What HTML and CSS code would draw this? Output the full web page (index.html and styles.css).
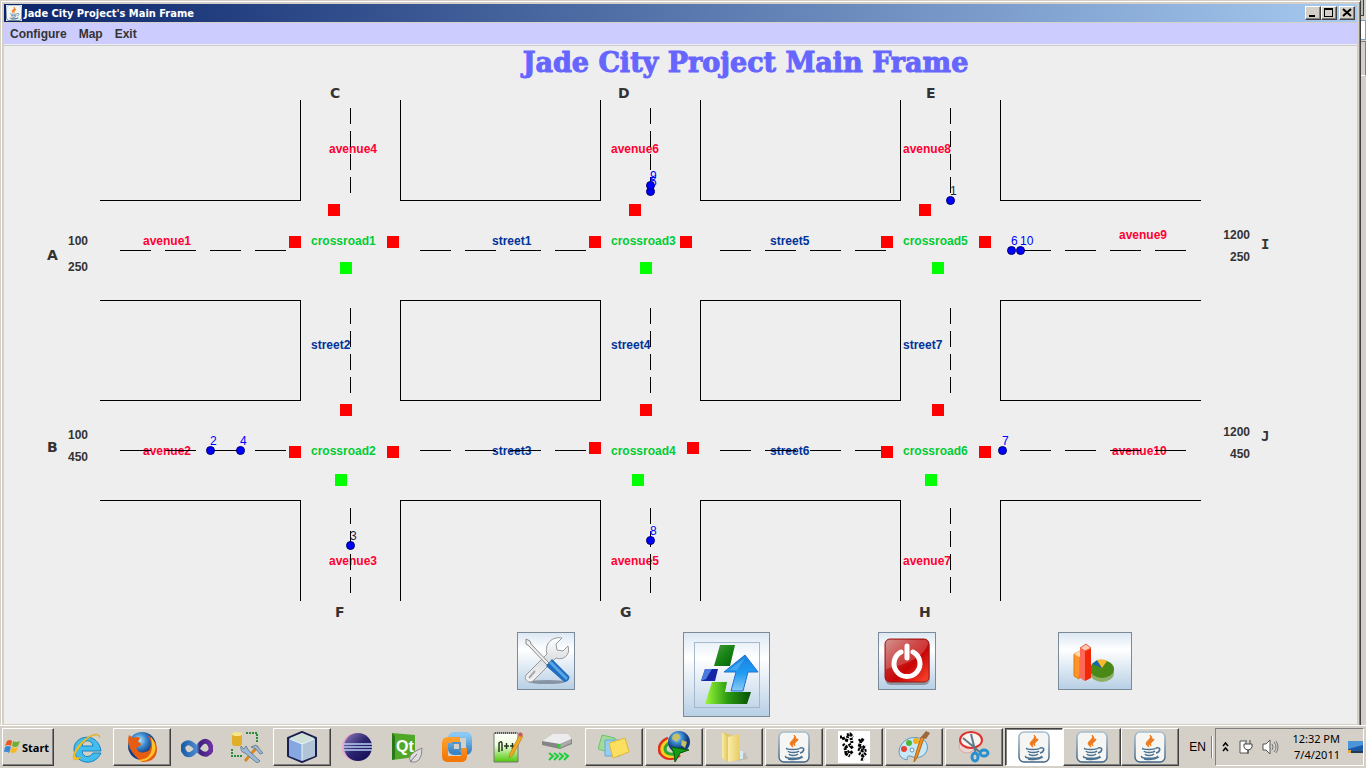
FILE: index.html
```html
<!DOCTYPE html>
<html lang="en">
<head>
<meta charset="utf-8">
<title>Jade City Project's Main Frame</title>
<link rel="stylesheet" href="styles.css">
</head>
<body>
<svg class="defs" aria-hidden="true">
  <defs>
    <linearGradient id="steel" x2="0" y2="1"><stop stop-color="#fff"/><stop offset=".5" stop-color="#dcdfe2"/><stop offset="1" stop-color="#f4f4f4"/></linearGradient>
    <linearGradient id="green" x2="1" y2="1"><stop stop-color="#4a9a42"/><stop offset=".5" stop-color="#168414"/><stop offset="1" stop-color="#076007"/></linearGradient>
    <linearGradient id="lime" x2="1" y2="0"><stop stop-color="#9cf83a"/><stop offset=".5" stop-color="#2a9a10"/><stop offset="1" stop-color="#065006"/></linearGradient>
    <linearGradient id="sky" x2="0" y2="1"><stop stop-color="#1b7fe0"/><stop offset=".5" stop-color="#1d9cf2"/><stop offset="1" stop-color="#8cc8f4"/></linearGradient>
    <linearGradient id="red" x2="1" y2="1"><stop stop-color="#c88078"/><stop offset=".4" stop-color="#c42020"/><stop offset=".6" stop-color="#c80505"/><stop offset="1" stop-color="#ff4a30"/></linearGradient>
    <linearGradient id="orange" x2="0" y2="1"><stop stop-color="#ff9d2a"/><stop offset="1" stop-color="#f47808"/></linearGradient>
    <linearGradient id="blue" x2="0" y2="1"><stop stop-color="#8cc8f4"/><stop offset="1" stop-color="#3a84c4"/></linearGradient>
    <linearGradient id="folder" x2="1" y2="0"><stop stop-color="#f9eda8"/><stop offset="1" stop-color="#e4c558"/></linearGradient>
    <linearGradient id="frame" x2="0" y2="1"><stop stop-color="#a8bfd0"/><stop offset="1" stop-color="#3f6383"/></linearGradient>
    <linearGradient id="violet" x2="1" y2="0"><stop stop-color="#1b5fa8"/><stop offset=".5" stop-color="#4d8ad0"/><stop offset=".6" stop-color="#40207c"/><stop offset="1" stop-color="#6a30a0"/></linearGradient>
    <linearGradient id="npp" x2="0" y2="1"><stop stop-color="#fff"/><stop offset=".4" stop-color="#f0ffe0"/><stop offset="1" stop-color="#50c808"/></linearGradient>
    <radialGradient id="globe" cx=".4" cy=".3"><stop stop-color="#b8ecff"/><stop offset=".5" stop-color="#3c8ad0"/><stop offset="1" stop-color="#123c80"/></radialGradient>
    <linearGradient id="dusk" x2="1" y2="1"><stop stop-color="#9080b8"/><stop offset=".5" stop-color="#2c2470"/><stop offset="1" stop-color="#100850"/></linearGradient>
    <symbol id="java" viewBox="0 0 32 32">
      <rect x="1" y="1" width="30" height="30" rx="5" fill="#f5f5f3" stroke="url(#frame)" stroke-width="1.5"/>
      <path d="M15 16c-8-5 4-7 1-12 6 5-4 7-1 12M17 15c-2-4 3-4 3-7-6 2-6 4-3 7" fill="#f07818" stroke="#f07818"/>
      <path d="M9 17c-3 2 14 2 12 0M10 20c1 2 9 2 11 0M11 23c1 2 7 2 9 0M22 17c6-1 4 4 0 5M8 25c-4 3 18 3 15 0M10 28c6 1 12 0 15-2" fill="none" stroke="#4a7190" stroke-width="1.5"/>
    </symbol>
    <rect id="light" width="12" height="12"/>
    <path id="dashes-h" d="M0 0h166" stroke-dasharray="31 14"/>
    <path id="dashes-v" d="M0 0v86" stroke-dasharray="16 7"/>
    <circle id="car" r="4"/>
  </defs>
</svg>

<div class="desktop">
  <main class="window">
    <header class="titlebar">
      <svg class="titlebar-icon"><use href="#java"/></svg>
      <span class="titlebar-text">Jade City Project's Main Frame</span>
      <button class="caption-button" aria-label="Minimize"><svg viewBox="0 0 14 12"><path d="M3 8h6v2H3z"/></svg></button>
      <button class="caption-button" aria-label="Maximize"><svg viewBox="0 0 14 12"><path d="M2 1h9v9H2zM3 3v6h7V3z" fill-rule="evenodd"/></svg></button>
      <button class="caption-button close" aria-label="Close"><svg viewBox="0 0 14 12"><path d="M3 2l8 7M11 2L3 9" stroke="#000" stroke-width="2"/></svg></button>
    </header>
    <nav class="menubar">
      <button class="menu">Configure</button><button class="menu">Map</button><button class="menu">Exit</button>
    </nav>
    <section class="content">
      <h1 class="heading">Jade City Project Main Frame</h1>
      <svg class="map" viewBox="4 80 1353 546" role="img" aria-label="City map">
        <g class="end-label">
          <text x="330" y="98">C</text><text x="618" y="98">D</text><text x="926" y="98">E</text>
          <text x="47" y="260">A</text><text x="47" y="452">B</text>
          <text x="335" y="617">F</text><text x="620" y="617">G</text><text x="919" y="617">H</text>
          <text class="mono" x="1261" y="249">I</text><text class="mono" x="1261" y="441">J</text>
        </g>
        <g class="coord">
          <text x="88" y="245">100</text><text x="88" y="271">250</text>
          <text x="88" y="439">100</text><text x="88" y="461">450</text>
          <text x="1250" y="239">1200</text><text x="1250" y="261">250</text>
          <text x="1250" y="436">1200</text><text x="1250" y="458">450</text>
        </g>
        <g class="road-label avenue">
          <text x="143" y="245">avenue1</text><text x="143" y="455">avenue2</text><text x="329" y="565">avenue3</text>
          <text x="329" y="153">avenue4</text><text x="611" y="565">avenue5</text><text x="611" y="153">avenue6</text>
          <text x="903" y="565">avenue7</text><text x="903" y="153">avenue8</text><text x="1119" y="239">avenue9</text>
          <text x="1112" y="455">avenue10</text>
        </g>
        <g class="road-label street">
          <text x="492" y="245">street1</text><text x="311" y="349">street2</text><text x="492" y="455">street3</text>
          <text x="611" y="349">street4</text><text x="770" y="245">street5</text><text x="770" y="455">street6</text>
          <text x="903" y="349">street7</text>
        </g>
        <g class="road-label crossroad">
          <text x="311" y="245">crossroad1</text><text x="311" y="455">crossroad2</text><text x="611" y="245">crossroad3</text>
          <text x="611" y="455">crossroad4</text><text x="903" y="245">crossroad5</text><text x="903" y="455">crossroad6</text>
        </g>
        <g class="lines" transform="translate(.4 .4)">
          <path d="M100 200H300V100M400 100V200H600V100M700 100V200H900V100M1000 100V200H1201"/>
          <path d="M100 300H300V400H100M400 300H600V400H400zM700 300H900V400H700zM1201 300H1000V400H1201"/>
          <path d="M100 500H300V601M400 601V500H600V601M700 601V500H900V601M1000 601V500H1201"/>
          <use href="#dashes-h" x="120" y="250"/><use href="#dashes-h" x="420" y="250"/><use href="#dashes-h" x="720" y="250"/><use href="#dashes-h" x="1020" y="250"/>
          <use href="#dashes-h" x="120" y="450"/><use href="#dashes-h" x="420" y="450"/><use href="#dashes-h" x="720" y="450"/><use href="#dashes-h" x="1020" y="450"/>
          <use href="#dashes-v" x="350" y="108"/><use href="#dashes-v" x="650" y="108"/><use href="#dashes-v" x="950" y="108"/>
          <use href="#dashes-v" x="350" y="308"/><use href="#dashes-v" x="650" y="308"/><use href="#dashes-v" x="950" y="308"/>
          <use href="#dashes-v" x="350" y="508"/><use href="#dashes-v" x="650" y="508"/><use href="#dashes-v" x="950" y="508"/>
        </g>
        <g class="stop">
          <use href="#light" x="328" y="204"/><use href="#light" x="289" y="236"/><use href="#light" x="387" y="236"/>
          <use href="#light" x="629" y="204"/><use href="#light" x="589" y="236"/><use href="#light" x="680" y="236"/>
          <use href="#light" x="919" y="204"/><use href="#light" x="881" y="236"/><use href="#light" x="979" y="236"/>
          <use href="#light" x="340" y="404"/><use href="#light" x="289" y="446"/><use href="#light" x="387" y="446"/>
          <use href="#light" x="640" y="404"/><use href="#light" x="589" y="442"/><use href="#light" x="687" y="442"/>
          <use href="#light" x="932" y="404"/><use href="#light" x="881" y="446"/><use href="#light" x="979" y="446"/>
        </g>
        <g class="go">
          <use href="#light" x="340" y="262"/><use href="#light" x="640" y="262"/><use href="#light" x="932" y="262"/>
          <use href="#light" x="335" y="474"/><use href="#light" x="632" y="474"/><use href="#light" x="925" y="474"/>
        </g>
        <g class="cars" transform="translate(.5 .5)">
          <use href="#car" x="210" y="450"/><use href="#car" x="240" y="450"/><use href="#car" x="350" y="545"/>
          <use href="#car" x="650" y="540"/><use href="#car" x="650" y="191"/><use href="#car" x="650" y="185"/>
          <use href="#car" x="950" y="200"/><use href="#car" x="1011" y="250"/><use href="#car" x="1020" y="250"/><use href="#car" x="1002" y="450"/>
        </g>
        <g class="car-label">
          <text x="210" y="445">2</text><text x="240" y="445">4</text><text class="dark" x="350" y="540">3</text>
          <text x="650" y="535">8</text><text x="650" y="186">5</text><text x="650" y="180">9</text>
          <text class="dark" x="950" y="195">1</text><text x="1011" y="245">6</text><text x="1020" y="245">10</text><text x="1002" y="445">7</text>
        </g>
      </svg>
      <div class="actions">
        <button class="action" aria-label="Settings">
          <svg width="48" height="48" viewBox="0 0 48 48">
            <ellipse cx="25" cy="45" rx="18" ry="2" fill="#6d7887" opacity=".7"/>
            <path d="M40 1l-6 6 1 6 6 1 5-5c3 9-5 15-12 12L12 43c-4 5-11 0-8-5l21-21C22 7 30-1 40 1z" fill="url(#steel)" stroke="#96999c"/>
            <path d="M7 41l6-7" stroke="#aaa" stroke-width="2"/>
            <path d="M4 2l4 2 1 3 18 19-2 2L7 9 4 7z" fill="#eee" stroke="#888"/>
            <path d="M30 22l17 17c2 3-3 8-6 5L24 29z" fill="#1f6fc0"/>
            <path d="M28 25l17 17" stroke="#5aa4e8" stroke-width="3"/>
          </svg>
        </button>
        <button class="action large" aria-label="Load">
          <span class="action-frame"><svg width="64" height="64" viewBox="0 0 64 64">
            <path d="M25 2h15l-5 21H19z" fill="url(#green)"/><path d="M10 26h13l-3 12H6z" fill="#1426a4"/><path d="M10 26h7l-6 10-5 2z" fill="#487ae0"/>
            <path d="M17 39h15l-2 10h26l-4 12H10z" fill="url(#lime)"/><path d="M50 12l13 17H53l-5 19H36l5-19H29z" fill="url(#sky)" stroke="#2470d0"/><path d="M50 15l-16 12h8z" fill="#55b0f0" opacity=".7"/>
          </svg></span>
        </button>
        <button class="action" aria-label="Power off">
          <svg width="48" height="48" viewBox="0 0 48 48">
            <rect x="2" y="3" width="45" height="45" rx="6" fill="#555" opacity=".5"/><rect x="2" y="2" width="44" height="43" rx="5" fill="url(#red)" stroke="#a01818"/>
            <path d="M6 3h36q3 0 3 4Q40 24 3 32V7q0-4 3-4" fill="#fff" opacity=".18"/>
            <path d="M18 15a13 13 0 1 0 12 0M24 9v12" fill="none" stroke="#fff" stroke-width="5" stroke-linecap="round"/>
          </svg>
        </button>
        <button class="action wide" aria-label="Statistics">
          <svg width="48" height="48" viewBox="0 0 48 48">
            <path d="M3 17l6-3v23l-1 5-5-3z" fill="#ff9428" stroke="#e47810"/><path d="M3 17l5 3 5-2-5-4z" fill="#ffd8a8"/>
            <ellipse cx="31" cy="36" rx="12" ry="9" fill="#8cb068"/><ellipse cx="31" cy="32" rx="12" ry="9" fill="#4a8818"/><path d="M31 31l-10-4 5-4z" fill="#1668a8"/><path d="M31 31l-5-8q6-2 10 1z" fill="#f8b830"/>
            <path d="M9 11l5 3v30l-5-3z" fill="#ff6858"/><path d="M14 14l6-3v30l-6 3z" fill="#f02808"/><path d="M9 11l6-4 5 4-6 3z" fill="#ffc8b0" stroke="#e85838"/>
          </svg>
        </button>
      </div>
    </section>
  </main>
  <aside class="behind"><span class="behind-button"></span><span class="behind-field"></span><span class="behind-thumb"></span></aside>
</div>

<footer class="taskbar">
  <button class="start raised">
    <svg width="17" height="16" viewBox="0 0 17 16"><path d="M3 2q3-2 5 0L7 7Q4 5 1 7z" fill="#e85820"/><path d="M9 2q3 2 7 0l-2 5q-3 2-6 0z" fill="#70b030"/><path d="M1 8q3-2 6 0l-2 6q-2-2-5-1z" fill="#3888d8"/><path d="M8 8q3 2 6 0l-2 5q-3 2-6 0z" fill="#f8b820"/></svg>Start
  </button>
  <button class="launcher first" aria-label="Internet Explorer"><svg viewBox="0 0 32 32"><path d="M30 20H11c1 8 9 6 11 2h8C23 37 3 32 3 18S27 0 30 20zM11 15h11c-1-7-10-7-11 0z" fill="#42bdf0" stroke="#1682c0"/><path d="M29 7C29-3 8 8 3 22c-3 9 2 8 8 4-8 2-9-1-3-9C16 6 27 0 29 7z" fill="#fbc520" stroke="#d89c10" stroke-width=".5"/></svg></button>
  <button class="task raised" aria-label="Firefox"><svg viewBox="0 0 32 32"><circle cx="16" cy="15" r="14" fill="url(#globe)"/><path d="M3 4l4 3q4-2 7 0l-2 4q3 0 3 3l-5 3q3 6 9 4 6-1 6-8 0-5-4-9 10 5 10 14 0 13-15 13S-2 19 3 4z" fill="#e85c10"/><path d="M25 6q9 12 0 20-6 6-14 3 16 0 15-16z" fill="#ffc62c"/></svg></button>
  <button class="launcher" aria-label="Visual Studio"><svg viewBox="0 0 32 32"><path d="M16 18Q9 9 4 13t1 10q6 3 12-7 6-9 11-4 5 8-2 11-5 1-10-5z" fill="none" stroke="url(#violet)" stroke-width="5"/></svg></button>
  <button class="launcher" aria-label="Database Tools"><svg viewBox="0 0 32 32"><rect x="1" y="2" width="10" height="13" rx="3" fill="#e0ae28"/><ellipse cx="6" cy="3" rx="5" ry="2" fill="#f8e48c"/><path d="M15 2h11v10M1 18v7h11" fill="none" stroke="#2c8c3c" stroke-width="2" stroke-dasharray="2 1"/><path d="M14 30l13-15" stroke="#d88820" stroke-width="3"/><path d="M10 15l3 3 2-3 3 5 11 10-3 2-12-10q-5-1-4-7M20 16l5-2 7 8-3 1-4-5z" fill="#9cb8d4" stroke="#6c8498"/></svg></button>
  <button class="task raised" aria-label="Cube"><svg viewBox="0 0 32 32"><path d="M16 1l14 6v18l-14 6-14-6V7z" fill="#b8d0e8" stroke="#1c2050" stroke-width="2" stroke-linejoin="round"/><path d="M3 8l13 5v17L3 25z" fill="#86a8e0"/><path d="M16 13l13-5v17l-13 5z" fill="#b0c4d8"/><path d="M4 7l12-5 12 5-12 6z" fill="#d0e0d8"/><path d="M16 13v16M4 8l12 5 12-5" fill="none" stroke="#e8f4fc"/></svg></button>
  <button class="launcher" aria-label="Eclipse"><svg viewBox="0 0 32 32"><circle cx="15" cy="16" r="14" fill="#eaa6d0"/><circle cx="17" cy="16" r="14" fill="url(#dusk)"/><path d="M3 13h28M3 16h28M3 19h28" stroke="#b8d0f0" stroke-width="1.3"/></svg></button>
  <button class="launcher" aria-label="Qt Creator"><svg viewBox="0 0 32 32"><path d="M1 2l23 2v22L1 29z" fill="#50a828"/><path d="M1 2l3 3v23l-3 1z" fill="#287818"/><text class="qt" x="5" y="21">Qt</text><path d="M31 17q0 16-11 14-6-7 11-14z" fill="#ddd" stroke="#888"/><path d="M19 31l7-8" stroke="#777"/></svg></button>
  <button class="launcher" aria-label="VMware"><svg viewBox="0 0 32 32"><rect x="10" y="4" width="18" height="17" rx="3" fill="none" stroke="url(#blue)" stroke-width="6"/><path d="M19 9H7q-3 0-3 3v13q0 3 3 3h13q3 0 3-3v-8" fill="none" stroke="url(#orange)" stroke-width="6"/><path d="M11 12h8v9" fill="none" stroke="#4f93c8" stroke-width="2"/></svg></button>
  <button class="launcher" aria-label="Notepad++"><svg viewBox="0 0 32 32"><path d="M3 2h24v29H3z" fill="url(#npp)" stroke="#777"/><path d="M4 2h22" stroke="#555" stroke-width="2" stroke-dasharray="1 1"/><path d="M8 21V12q3-3 3 1v7M13 15h5M15.500 12v6M19 15h5M21.500 12v6" fill="none" stroke="#243820" stroke-width="1.500"/><path d="M29 3l3 2-10 19-4 3 1-5z" fill="#f0a820" stroke="#a86c10" stroke-width=".5"/><path d="M29 1l3 2-2 3-3-2z" fill="#c85858"/></svg></button>
  <button class="launcher" aria-label="Drive"><svg viewBox="0 0 32 32"><path d="M1 10L12 4h15l4 4v5l-12 5L1 14z" fill="#858585"/><path d="M1 10l11-7h15l4 5-12 5z" fill="#ececec"/><path d="M18 14l12-6v4l-11 5z" fill="#aaa"/><path d="M18 13v4" stroke="#3c3" stroke-width="3"/><path d="M8 22l4 3-4 4M13 22l4 3-4 4M18 22l4 3-4 4M23 22l4 3-4 4" fill="none" stroke="#1bce38" stroke-width="2"/></svg></button>
  <button class="task raised grouped" aria-label="Sticky Notes"><svg viewBox="0 0 32 32"><path d="M4 4l13 3-3 15-14-4z" fill="#a0dc98" stroke="#70c070"/><path d="M7 9h15v16H7z" fill="#98ccf0" stroke="#68a8d8"/><path d="M11 12l16-5 4 14-16 6z" fill="#fbe060" stroke="#e0b838"/></svg></button>
  <button class="task raised" aria-label="Download Manager"><svg viewBox="0 0 32 32"><path d="M10 7Q-1 12 2 22q8 10 20 2" fill="none" stroke="#e03020" stroke-width="3"/><path d="M11 9Q1 15 5 22q8 7 17 0" fill="none" stroke="#f8d020" stroke-width="3"/><path d="M11 12Q5 16 8 21q6 5 13-1" fill="none" stroke="#30a830" stroke-width="3"/><circle cx="21" cy="11" r="11" fill="url(#globe)"/><path d="M15 4q5-3 7 1l-3 6-5-3M24 9l5 2-2 6-4-3" fill="#c8c060"/><path d="M13 16l18 3-9 3-5 9-1-9z" fill="#129c18" stroke="#085808"/></svg></button>
  <button class="task raised" aria-label="Folder"><svg viewBox="0 0 32 32"><path d="M19 30l8-9 3 7z" fill="#888" opacity=".3"/><path d="M4 1l12 4 5-2v26l-11 1-6-3z" fill="#e0c468"/><path d="M4 1l6 5v25l-6-4z" fill="url(#folder)"/><path d="M10 6l11-3v18l3-2v9l-14 3z" fill="url(#folder)"/><path d="M22 20h3v8h-3z" fill="#d4ecf8"/></svg></button>
  <button class="task raised" aria-label="Java"><svg><use href="#java"/></svg></button>
  <button class="task raised" aria-label="Animation"><svg viewBox="0 0 32 32"><path fill="#fff" d="M0 0h32v32H0z"/><path d="M2 6h3l1 3M9 4l3-1 3 3M10 5l-2 6M13 7l1 5M5 13l3 3 4-2 3 4M7 17l1 5 4-2 3 3M8 23l4 2M21 10l2-2 3 2M23 10l-2 6 4 1 2-3M20 18l5 2 4-1M21 22l4 3 3-3M23 28l3 1" fill="none" stroke="#000" stroke-width="3" stroke-dasharray="2 1 3 1"/></svg></button>
  <button class="task raised" aria-label="Paint"><svg viewBox="0 0 32 32"><path d="M3 14Q10 3 25 8q8 7 2 15-6 6-15 2-3-1-3 4-8-2-8-8 0-4 2-7z" fill="#c8e8f8" stroke="#6098bc"/><circle cx="6" cy="18" r="3" fill="#e84030"/><circle cx="11" cy="12" r="3" fill="#50b838"/><circle cx="18" cy="10" r="3" fill="#f0b018"/><circle cx="14" cy="19" r="2" fill="#f6f6f4" stroke="#6098bc"/><path d="M26 7l-7 20-3 4 1-6 6-19z" fill="#f09020" stroke="#b06818"/><path d="M23 6l5-6 4 2-4 6z" fill="#9a683c"/></svg></button>
  <button class="task raised" aria-label="Snipping Tool"><svg viewBox="0 0 32 32"><ellipse cx="9" cy="15" rx="8" ry="7" fill="#ecd4d0" stroke="#d8a8a0"/><ellipse cx="13" cy="9" rx="11" ry="8" fill="#f6f4f0" stroke="#e03030" stroke-width="2"/><path d="M5 7l18 15M13 3l5 20" stroke="#607888" stroke-width="2"/><ellipse cx="17" cy="26" rx="3" ry="4" fill="none" stroke="#2890d0" stroke-width="3"/><ellipse cx="26" cy="22" rx="4" ry="3" fill="none" stroke="#2890d0" stroke-width="3"/></svg></button>
  <button class="task raised active" aria-label="Jade City Project"><svg><use href="#java"/></svg></button>
  <button class="task raised joined" aria-label="Java window 2"><svg><use href="#java"/></svg></button>
  <button class="task raised joined" aria-label="Java window 3"><svg><use href="#java"/></svg></button>
  <button class="language">EN</button>
  <div class="tray">
    <svg width="9" height="12" viewBox="0 0 9 12"><path d="M2 5l2.500-3L7 5M2 10l2.500-3L7 10" fill="none" stroke="#000" stroke-width="1.500"/></svg>
    <svg width="16" height="16" viewBox="0 0 16 16"><path d="M7 2H2v12h8v-3" fill="#fff" stroke="#555"/><path d="M8 1v4M12 1v4M6 5h8v3q-1 3-4 3t-4-3zM10 11v4" fill="#fff" stroke="#444"/></svg>
    <svg width="17" height="16" viewBox="0 0 17 16"><path d="M1 5h3l4-4v14l-4-4H1z" fill="#fff" stroke="#555"/><path d="M10 5q2 3 0 6M12 3q4 5 0 10M14 2q4 6 0 12" fill="none" stroke="#777"/></svg>
    <time class="clock">12:32 PM<br>7/4/2011</time>
    <svg class="show-desktop" width="15" height="12" viewBox="0 0 15 12"><path d="M0 0h15v12H0z" fill="#1c58a8"/><path d="M0 0h15v4L0 8z" fill="#4c94d8"/><path d="M0 10h15v2H0z" fill="#243850"/><path d="M0 9h3v3H0z" fill="#e8a830"/></svg>
  </div>
</footer>
</body>
</html>
```
FILE: styles.css
```css
* { box-sizing: border-box; }

body {
  margin: 0;
  min-height: 100vh;
  display: flex;
  flex-direction: column;
  background: #d4d0c8;
  font: 12px "Liberation Sans", Arial, sans-serif;
  color: #333;
}

button { font: inherit; color: inherit; padding: 0; border: 0; background: none; }
svg { display: block; flex: none; }
.defs { position: absolute; width: 0; height: 0; }

.desktop { flex: 1; display: flex; }

.window {
  flex: 1;
  min-width: 0;
  display: flex;
  flex-direction: column;
  padding: 3px 3px 0 3px;
  border: 1px solid #d4d0c8;
  border-right: 1px solid #404040;
  border-bottom: 0;
  background: #d4d0c8;
  box-shadow: inset 1px 1px #fff, inset -1px 0 #808080;
}

.titlebar {
  height: 18px;
  display: flex;
  align-items: center;
  padding: 0 2px;
  background: linear-gradient(90deg, #0a246a, #a6caf0);
  color: #fff;
}
.titlebar-icon { width: 16px; height: 16px; margin-right: 2px; background: #f5f5f3; }
.titlebar-text { flex: 1; font: bold 11px "DejaVu Sans Condensed", Tahoma, sans-serif; }

.caption-button {
  width: 16px;
  height: 14px;
  background: #d4d0c8;
  border: 1px solid;
  border-color: #fff #404040 #404040 #fff;
  box-shadow: inset -1px -1px #808080;
}
.caption-button svg { width: 14px; height: 12px; }
.close { margin-left: 2px; }

.menubar {
  height: 22px;
  margin-top: 1px;
  padding-left: 6px;
  display: flex;
  gap: 12px;
  background: #ccccff;
  border-bottom: 1px solid #eee;
  font-weight: bold;
}

.content {
  flex: 1;
  background: #eee;
  border-top: 1px solid #ccc;
  border-bottom: 1px solid #d4d0c8;
}
.heading {
  margin: 0;
  height: 34px;
  padding-left: 130px;
  font: bold 27px/34px "DejaVu Serif", serif;
  text-align: center;
  white-space: nowrap;
  color: #6666ff;
  -webkit-text-stroke: 1px #6666ff;
}

.map { width: 100%; height: auto; }
.end-label { font: bold 14px "DejaVu Sans", Verdana, sans-serif; fill: #333; }
.mono { font-family: "DejaVu Sans Mono", monospace; }
.coord { font-weight: bold; fill: #333; text-anchor: end; }
.road-label { font-weight: bold; }
.avenue { fill: #ff0033; }
.street { fill: #003399; }
.crossroad { fill: #00cc33; }
.lines { fill: none; stroke: #000; shape-rendering: crispEdges; }
.stop { fill: #f00; }
.go { fill: #0f0; }
.cars { fill: #00f; stroke: #000066; }
.car-label { fill: #00f; }
.dark { fill: #222244; }

.actions {
  display: flex;
  align-items: flex-start;
  gap: 108px;
  padding: 6px 0 7px 513px;
}
.action {
  width: 58px;
  height: 58px;
  display: flex;
  align-items: center;
  justify-content: center;
  border: 1px solid #7a8a99;
  background: linear-gradient(#dde8f3, #fff 30%, #b8cfe5);
}
.large { width: 87px; height: 85px; }
.action-frame { border: 1px solid #a3b8cc; }
.wide { width: 74px; margin-left: 14px; }

.behind { width: 5px; display: flex; flex-direction: column; background: #d4d0c8; }
.behind-button { height: 16px; margin-right: 2px; border-right: 1px solid #404040; border-bottom: 1px solid #404040; background: #bbb; }
.behind-field { height: 20px; margin-top: 4px; border: 1px solid #7aa0c8; border-left: 0; background: #fff; }
.behind-thumb { height: 35px; margin-top: 1px; border: 1px solid #808080; border-left: 0; border-bottom-color: #fff; }

.taskbar {
  height: 43px;
  display: flex;
  align-items: center;
  padding: 0 2px;
  border-top: 1px solid #fff;
  background: #d4d0c8;
}
.raised {
  height: 38px;
  border: 1px solid;
  border-color: #fff #404040 #404040 #fff;
  box-shadow: inset -1px -1px #808080;
}
.start {
  width: 52px;
  display: flex;
  align-items: center;
  gap: 1px;
  padding-left: 1px;
  font: bold 11px "Noto Sans", Tahoma, sans-serif;
  color: #000;
}
.launcher, .task { display: flex; flex: none; align-items: center; justify-content: center; }
.launcher { width: 50px; height: 38px; }
.launcher svg, .task svg { width: 32px; height: 32px; }
.first { margin-left: 8px; }
.task { width: 58px; margin: 0 1px; }
.grouped { margin-left: 3px; }
.joined { margin: 0; }
.active { margin-right: 0; background: #fff; border-color: #404040 #fff #fff #404040; box-shadow: inset 1px 1px #808080; }
.qt { font: bold 16px "Liberation Sans", Arial, sans-serif; fill: #fff; }

.language {
  width: 33px;
  height: 22px;
  margin-left: auto;
  padding-right: 6px;
  border-right: 1px solid #fff;
  box-shadow: inset -1px 0 #808080;
  text-align: right;
  line-height: 20px;
  color: #000;
}
.tray {
  height: 38px;
  width: 149px;
  margin-left: 2px;
  padding-left: 5px;
  display: flex;
  align-items: center;
  gap: 8px;
  border: 1px solid;
  border-color: #808080 #fff #fff #808080;
  color: #000;
}
.clock { flex: 1; font: 11px/16px "Noto Sans", Tahoma, sans-serif; text-align: right; white-space: nowrap; }
```
